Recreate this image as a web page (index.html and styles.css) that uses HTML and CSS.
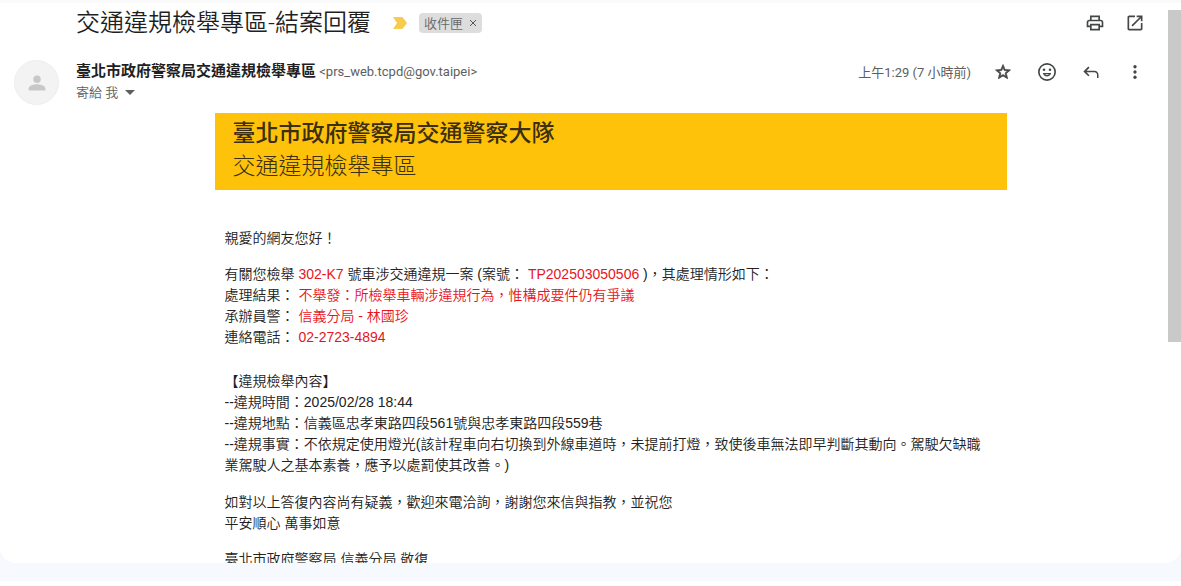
FILE: index.html
```
<!DOCTYPE html>
<html lang="zh-Hant">
<head>
    <meta charset="UTF-8">
    <meta name="viewport" content="width=device-width, initial-scale=1.0">
    <title>交通違規檢舉專區-結案回覆</title>
    <link rel="stylesheet" href="styles.css">
</head>
<body>
    <div class="mail-card">
        <main class="mail">
            <div class="subject-row">
                <h1>交通違規檢舉專區-結案回覆</h1>
                <svg class="important" viewBox="0 0 14 12" aria-hidden="true">
                    <path d="M0 0h8.5q1 0 1.6.8L14 6l-3.9 5.2q-.6.8-1.6.8H0l4-6z"/>
                </svg>
                <div class="label">
                    <span>收件匣</span>
                    <button type="button" class="label-remove" aria-label="移除標籤">
                        <svg viewBox="0 0 8 8"><path d="M1 1l6 6M7 1L1 7"/></svg>
                    </button>
                </div>
                <div class="subject-actions">
                    <button type="button" class="icon-button" aria-label="列印">
                        <svg viewBox="0 0 24 24"><path d="M19 8h-1V3H6v5H5c-1.66 0-3 1.34-3 3v6h4v4h12v-4h4v-6c0-1.66-1.34-3-3-3zM8 5h8v3H8V5zm8 12v2H8v-4h8v2zm2-2v-2H6v2H4v-4c0-.55.45-1 1-1h14c.55 0 1 .45 1 1v4h-2z"/></svg>
                    </button>
                    <button type="button" class="icon-button" aria-label="在新視窗中開啟">
                        <svg viewBox="0 0 24 24"><path d="M19 19H5V5h7V3H5c-1.11 0-2 .9-2 2v14c0 1.1.89 2 2 2h14c1.1 0 2-.9 2-2v-7h-2v7zM14 3v2h3.59l-9.83 9.83 1.41 1.41L19 6.41V10h2V3h-7z"/></svg>
                    </button>
                </div>
            </div>

            <div class="sender-row">
                <div class="avatar">
                    <svg viewBox="0 0 24 24" aria-hidden="true"><circle cx="12" cy="7.5" r="4.5"/><path d="M2 21v-2.5c0-3.4 6.6-5 10-5s10 1.6 10 5V21z"/></svg>
                </div>
                <div class="sender">
                    <div class="sender-line">
                        <span class="sender-name">臺北市政府警察局交通違規檢舉專區</span>
                        <span class="sender-address">&lt;prs_web.tcpd@gov.taipei&gt;</span>
                    </div>
                    <button type="button" class="recipient">
                        寄給 我
                        <svg viewBox="0 0 10 5" aria-hidden="true"><path d="M0 0h10L5 5z"/></svg>
                    </button>
                </div>
                <div class="message-actions">
                    <span class="time">上午1:29 (7 小時前)</span>
                    <button type="button" class="icon-button star" aria-label="加上星號">
                        <svg viewBox="0 0 24 24"><path d="M22 9.24l-7.19-.62L12 2 9.19 8.63 2 9.24l5.46 4.73L5.82 21 12 17.27 18.18 21l-1.63-7.03L22 9.24zM12 15.4l-3.76 2.27 1-4.28-3.32-2.88 4.38-.38L12 6.1l1.71 4.04 4.38.38-3.32 2.88 1 4.28L12 15.4z"/></svg>
                    </button>
                    <button type="button" class="icon-button" aria-label="新增表情符號回應">
                        <svg viewBox="0 0 24 24"><path d="M12 0a12 12 0 1 0 0 24 12 12 0 0 0 0-24zm0 21.800a9.800 9.800 0 1 1 0-19.600 9.800 9.800 0 0 1 0 19.600z"/><circle cx="8" cy="9" r="1.700"/><circle cx="16" cy="9" r="1.700"/><path fill-rule="evenodd" d="M6.500 13.200h11c-.6 2.900-2.800 4.800-5.500 4.800s-4.900-1.900-5.500-4.800zm3 1.700c.7.8 1.500 1.200 2.500 1.200s1.800-.4 2.500-1.200z"/></svg>
                    </button>
                    <button type="button" class="icon-button" aria-label="回覆">
                        <svg viewBox="0 0 24 24"><path d="M20 20v-4.500c0-1.900-1.500-3.300-3.300-3.300H6l4 4L8.400 17.800 1.800 11.200l6.600-6.600L10 6.200l-4 4h10.700c3 0 5.300 2.300 5.300 5.300V20z"/></svg>
                    </button>
                    <button type="button" class="icon-button" aria-label="更多">
                        <svg viewBox="0 0 24 24"><circle cx="12" cy="5" r="2.200"/><circle cx="12" cy="12" r="2.200"/><circle cx="12" cy="19" r="2.200"/></svg>
                    </button>
                </div>
            </div>

            <article class="message">
                <header class="banner">
                    <h2>臺北市政府警察局交通警察大隊</h2>
                    <p>交通違規檢舉專區</p>
                </header>
                <div class="message-text">
                    <p class="greeting">親愛的網友您好！</p>
                    <p class="result">
                        有關您檢舉 <em>302-K7</em> 號車涉交通違規一案 (案號： <em>TP202503050506</em> )，其處理情形如下：<br>
                        處理結果： <em>不舉發：所檢舉車輛涉違規行為，惟構成要件仍有爭議</em><br>
                        承辦員警： <em>信義分局 - 林國珍</em><br>
                        連絡電話： <em>02-2723-4894</em>
                    </p>
                    <p class="report">
                        【違規檢舉內容】<br>
                        --違規時間：2025/02/28 18:44<br>
                        --違規地點：信義區忠孝東路四段561號與忠孝東路四段559巷<br>
                        --違規事實：不依規定使用燈光(該計程車向右切換到外線車道時，未提前打燈，致使後車無法即早判斷其動向。駕駛欠缺職業駕駛人之基本素養，應予以處罰使其改善。)
                    </p>
                    <p class="closing">
                        如對以上答復內容尚有疑義，歡迎來電洽詢，謝謝您來信與指教，並祝您<br>
                        平安順心 萬事如意
                    </p>
                    <p>臺北市政府警察局 信義分局 敬復</p>
                </div>
            </article>
        </main>
        <div class="scrollbar"><div class="scrollbar-thumb"></div></div>
    </div>
</body>
</html>
```
FILE: styles.css
```
* {
    box-sizing: border-box;
}

body {
    margin: 0;
    height: 100vh;
    padding-bottom: 23px;
    overflow: hidden;
    background: linear-gradient(to top, #fefefe 5px, #f6f9fd 5px);
    color: #222;
    font-family: "Liberation Sans", "Noto Sans CJK TC", sans-serif;
    font-size: 14px;
    line-height: 21px;
}

h1, h2, p {
    margin: 0;
}

button {
    display: flex;
    align-items: center;
    justify-content: center;
    padding: 0;
    border: 0;
    background: none;
    color: inherit;
    font: inherit;
    cursor: pointer;
}

svg {
    fill: currentColor;
}

.mail-card {
    display: flex;
    height: 100%;
    overflow: hidden;
    background-color: #fff;
    border-top: 3px solid #fafafa;
    border-radius: 0 0 16px 16px;
}

.mail {
    flex: 1;
    min-width: 0;
    padding: 0 21px 0 14px;
    font-family: Roboto, "Noto Sans CJK TC", sans-serif;
}

/* Subject */
.subject-row {
    display: flex;
    align-items: center;
    height: 40px;
    padding-left: 62px;
}

.subject-row h1 {
    color: #1f1f1f;
    font-size: 24px;
    font-weight: 350;
    line-height: 32px;
}

.important {
    width: 14px;
    height: 12px;
    margin: 0 12px 0 22px;
    color: #f7cb4d;
}

.label {
    display: flex;
    align-items: center;
    gap: 6px;
    height: 20px;
    padding: 0 5px;
    background-color: #ddd;
    border-radius: 4px;
    color: #666;
    font-size: 13px;
    font-weight: 350;
}

.label-remove svg {
    width: 8px;
    height: 8px;
    stroke: #555;
    stroke-width: 1;
}

.subject-actions {
    display: flex;
    gap: 16px;
    margin-left: auto;
}

.icon-button {
    width: 24px;
    height: 24px;
    color: #444746;
}

.icon-button svg {
    width: 20px;
    height: 20px;
}

/* Sender */
.sender-row {
    display: flex;
    align-items: flex-start;
    padding-top: 17px;
}

.avatar {
    display: flex;
    align-items: center;
    justify-content: center;
    width: 45px;
    height: 45px;
    margin-right: 17px;
    background-color: #f3f3f3;
    border: 1px solid #eee;
    border-radius: 50%;
    color: #c8c8c8;
}

.avatar svg {
    width: 20px;
    height: 22px;
}

.sender {
    padding-top: 1px;
    color: #5e5e5e;
    font-size: 13px;
}

.sender-name {
    color: #1f1f1f;
    font-size: 15px;
    font-weight: 700;
}

.recipient {
    gap: 7px;
    font-weight: 350;
}

.recipient svg {
    width: 10px;
    height: 5px;
}

.message-actions {
    display: flex;
    align-items: center;
    gap: 20px;
    margin-left: auto;
    color: #5e5e5e;
}

.time {
    font-size: 13px;
}

.message-actions .icon-button svg {
    width: 18px;
    height: 18px;
}

.star svg {
    stroke: currentColor;
    stroke-width: 1;
}

/* Message */
.message {
    padding: 8px 2px 0 62px;
    font-family: "Liberation Sans", "Noto Sans CJK TC", sans-serif;
    font-weight: 350;
}

.banner,
.message-text {
    max-width: 792px;
    margin: 0 auto;
}

.banner {
    padding: 4px 18px 7px;
    background-color: #ffc20a;
    color: #3b2f10;
    font-size: 23px;
    line-height: 33px;
}

.banner h2 {
    font-size: 23px;
    font-weight: 500;
}

.banner p {
    font-weight: 300;
}

.message-text {
    padding: 38px 24px 0 10px;
}

.message-text em {
    color: #e8141c;
    font-style: normal;
}

.greeting,
.closing {
    margin-bottom: 15px;
}

.result {
    margin-bottom: 23px;
}

.report {
    margin-bottom: 16px;
}

/* Scrollbar */
.scrollbar {
    width: 13px;
    padding-top: 7px;
}

.scrollbar-thumb {
    height: 60%;
    background-color: #c9c9c9;
}
```
